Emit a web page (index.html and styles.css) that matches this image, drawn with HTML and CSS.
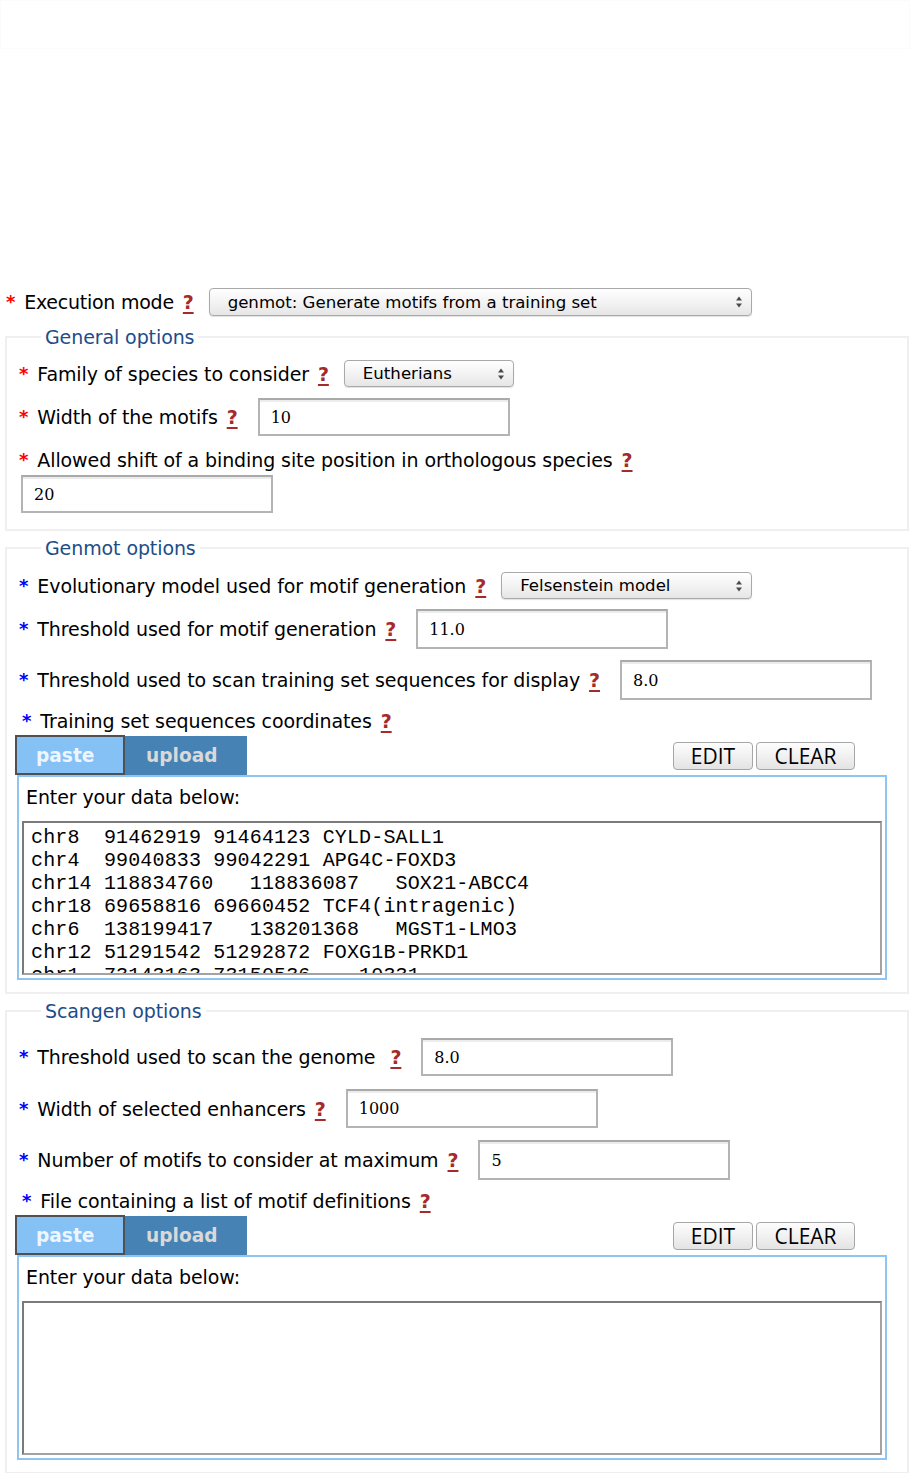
FILE: index.html
```html
<!DOCTYPE html>
<html>
<head>
<meta charset="utf-8">
<title>Motif tool</title>
<link rel="stylesheet" href="styles.css">
</head>
<body>
<div class="topbox"></div>
<div class="page">
  <div class="row exec-row">
    <span class="req red">*</span><span class="label">Execution mode</span><a class="help">?</a>
    <span class="select-wrap">
      <select class="select w-exec"><option>genmot: Generate motifs from a training set</option></select>
      <svg class="arrows" width="8" height="12" viewBox="0 0 8 12"><path d="M4 0.5 L7 4.5 L1 4.5 Z M1 7.5 L7 7.5 L4 11.5 Z" fill="#4a4a4a"/></svg>
    </span>
  </div>

  <fieldset class="group first">
    <legend>General options</legend>
    <div class="row r-family">
      <span class="req red">*</span><span class="label">Family of species to consider</span><a class="help">?</a>
      <span class="select-wrap">
        <select class="select w-family"><option>Eutherians</option></select>
        <svg class="arrows" width="8" height="12" viewBox="0 0 8 12"><path d="M4 0.5 L7 4.5 L1 4.5 Z M1 7.5 L7 7.5 L4 11.5 Z" fill="#4a4a4a"/></svg>
      </span>
    </div>
    <div class="row r-width">
      <span class="req red">*</span><span class="label">Width of the motifs</span><a class="help">?</a>
      <input class="text" type="text" value="10">
    </div>
    <div class="row r-shift">
      <span class="req red">*</span><span class="label">Allowed shift of a binding site position in orthologous species</span><a class="help">?</a>
    </div>
    <div class="row r-shift-in">
      <input class="text flush" type="text" value="20">
    </div>
  </fieldset>

  <fieldset class="group">
    <legend>Genmot options</legend>
    <div class="row r-evo">
      <span class="req blue">*</span><span class="label">Evolutionary model used for motif generation</span><a class="help">?</a>
      <span class="select-wrap">
        <select class="select w-evo"><option>Felsenstein model</option></select>
        <svg class="arrows" width="8" height="12" viewBox="0 0 8 12"><path d="M4 0.5 L7 4.5 L1 4.5 Z M1 7.5 L7 7.5 L4 11.5 Z" fill="#4a4a4a"/></svg>
      </span>
    </div>
    <div class="row r-gen">
      <span class="req blue">*</span><span class="label">Threshold used for motif generation</span><a class="help">?</a>
      <input class="text tall" type="text" value="11.0">
    </div>
    <div class="row r-disp">
      <span class="req blue">*</span><span class="label">Threshold used to scan training set sequences for display</span><a class="help">?</a>
      <input class="text tall" type="text" value="8.0">
    </div>
    <div class="row r-data indent">
      <span class="req blue">*</span><span class="label">Training set sequences coordinates</span><a class="help">?</a>
    </div>
    <div class="tabbar">
      <span class="tab active">paste</span><span class="tab">upload</span>
      <span class="tools"><button class="btn w-edit">EDIT</button><button class="btn w-clear">CLEAR</button></span>
    </div>
    <div class="panel">
      <div class="panel-label">Enter your data below:</div>
      <textarea class="data" wrap="off">chr8  91462919 91464123 CYLD-SALL1
chr4  99040833 99042291 APG4C-FOXD3
chr14 118834760   118836087   SOX21-ABCC4
chr18 69658816 69660452 TCF4(intragenic)
chr6  138199417   138201368   MGST1-LMO3
chr12 51291542 51292872 FOXG1B-PRKD1
chr1  73143163 73150536    10331
chr2  12345678 12346789 ABC1-DEF2</textarea>
    </div>
  </fieldset>

  <fieldset class="group">
    <legend>Scangen options</legend>
    <div class="row r-scan1">
      <span class="req blue">*</span><span class="label">Threshold used to scan the genome&nbsp;</span><a class="help">?</a>
      <input class="text" type="text" value="8.0">
    </div>
    <div class="row r-scan2">
      <span class="req blue">*</span><span class="label">Width of selected enhancers</span><a class="help">?</a>
      <input class="text mid" type="text" value="1000">
    </div>
    <div class="row r-scan3">
      <span class="req blue">*</span><span class="label">Number of motifs to consider at maximum</span><a class="help">?</a>
      <input class="text tall" type="text" value="5">
    </div>
    <div class="row r-data indent">
      <span class="req blue">*</span><span class="label">File containing a list of motif definitions</span><a class="help">?</a>
    </div>
    <div class="tabbar">
      <span class="tab active">paste</span><span class="tab">upload</span>
      <span class="tools"><button class="btn w-edit">EDIT</button><button class="btn w-clear">CLEAR</button></span>
    </div>
    <div class="panel">
      <div class="panel-label">Enter your data below:</div>
      <textarea class="data" wrap="off"></textarea>
    </div>
  </fieldset>
</div>
</body>
</html>
```

FILE: styles.css
```css
html, body {
  margin: 0;
  padding: 0;
  background: #fff;
}
body {
  font-family: "DejaVu Sans", Verdana, sans-serif;
  font-size: 19px;
  letter-spacing: -0.1px;
  color: #000;
}
.topbox {
  height: 47px;
  border: 1px solid #fbfbfd;
}
.page {
  padding: 239px 1px 0 5px;
}
.row {
  display: flex;
  align-items: center;
  padding-left: 2px;
  line-height: 22px;
}
.exec-row {
  padding-left: 1px;
  letter-spacing: -0.25px;
}
.row.indent {
  padding-left: 5px;
}
.req {
  font-weight: bold;
  font-size: 18px;
  margin-right: 9px;
}
.red { color: #ff0000; }
.blue { color: #0000ff; }
.label {
  white-space: pre;
}
.help {
  color: #a52a2a;
  font-weight: bold;
  text-decoration: underline;
  text-decoration-thickness: 2px;
  text-underline-offset: 3px;
  margin-left: 9px;
  margin-right: 15px;
  cursor: help;
}
.select-wrap {
  position: relative;
  display: inline-block;
}
.select {
  appearance: none;
  -webkit-appearance: none;
  font-family: "DejaVu Sans", Verdana, sans-serif;
  font-size: 16.6px;
  letter-spacing: 0;
  color: #000;
  padding: 0 0 0 18px;
  border: 1px solid #a9a9a9;
  border-radius: 4px;
  background: linear-gradient(#ffffff, #f3f3f3 50%, #e6e6e6);
  box-shadow: 0 1px 1px rgba(0, 0, 0, 0.12);
  display: block;
  margin: 0;
}
.w-exec { width: 543px; height: 28px; }
.w-family { width: 170px; height: 27px; }
.w-evo { width: 251px; height: 27px; }
.arrows {
  position: absolute;
  right: 9px;
  top: 50%;
  margin-top: -6px;
  pointer-events: none;
}
.text {
  box-sizing: border-box;
  width: 252px;
  height: 38px;
  margin: 0 0 0 5px;
  padding: 0 0 0 11px;
  border: 2px solid #b4b4b4;
  border-top-color: #a9a9a9;
  box-shadow: inset 0 2px 0 #ececec;
  font-family: "DejaVu Serif", serif;
  font-size: 16px;
  letter-spacing: 0;
  color: #000;
  background: #fff;
  outline: none;
}
.text.mid { height: 39px; }
.text.tall { height: 40px; }
.text.flush { margin-left: 2px; }

.group {
  margin: 6px 0 0 0;
  padding: 0 10px 12px 10px;
  border: 2px solid #efefef;
  min-width: 0;
}
.group.first {
  margin-top: 10px;
  padding-bottom: 16px;
}
.group legend {
  margin-left: 24px;
  padding: 0 4px;
  color: #1d4d88;
  line-height: 22px;
}
.r-family { margin-top: 12px; }
.r-width { margin-top: 11px; }
.r-shift { margin-top: 13px; }
.r-shift-in { margin-top: 4px; }
.r-evo { margin-top: 13px; }
.r-gen { margin-top: 10px; }
.r-disp { margin-top: 11px; }
.r-data { margin-top: 10px; }
.r-scan1 { margin-top: 16px; }
.r-scan2 { margin-top: 13px; }
.r-scan3 { margin-top: 12px; }

.tabbar {
  display: flex;
  align-items: flex-end;
  margin: 3px 10px 0 -2px;
}
.tab {
  box-sizing: border-box;
  height: 39px;
  width: 122px;
  padding-left: 21px;
  font-weight: bold;
  font-size: 18.6px;
  letter-spacing: 0;
  line-height: 39px;
  background: #4682b4;
  color: #d9d9d9;
}
.tab.active {
  height: 40px;
  width: 110px;
  padding-left: 19px;
  line-height: 38px;
  border: 2px solid #505050;
  background: #86c1f5;
  color: #eef5fc;
}
.tools {
  margin-left: auto;
  margin-right: 32px;
  margin-bottom: 5px;
  display: flex;
  gap: 3px;
}
.btn {
  box-sizing: border-box;
  height: 28px;
  padding: 0;
  border: 1px solid #a6a6a6;
  border-radius: 4px;
  background: linear-gradient(#fdfdfd, #f1f1f1 50%, #e3e3e3);
  font-family: "Open Sans", sans-serif;
  font-size: 21px;
  letter-spacing: 0;
  line-height: 24px;
  color: #000;
}
.w-edit { width: 80px; }
.w-clear { width: 99px; }

.panel {
  margin-right: 10px;
  padding: 9px 3px 3px 3px;
  border: 2px solid #90c5f2;
  background: #fff;
}
.panel-label {
  margin-left: 4px;
  line-height: 22px;
}
.data {
  display: block;
  box-sizing: border-box;
  width: 100%;
  height: 154px;
  margin: 13px 0 0 0;
  padding: 3px 7px;
  border: 2px solid #7a7a7a;
  border-right-color: #a3a3a3;
  border-bottom-color: #a3a3a3;
  font-family: "Liberation Mono", monospace;
  font-size: 20px;
  letter-spacing: 0.15px;
  line-height: 23px;
  color: #000;
  resize: none;
  overflow: hidden;
  white-space: pre;
  outline: none;
}
```
